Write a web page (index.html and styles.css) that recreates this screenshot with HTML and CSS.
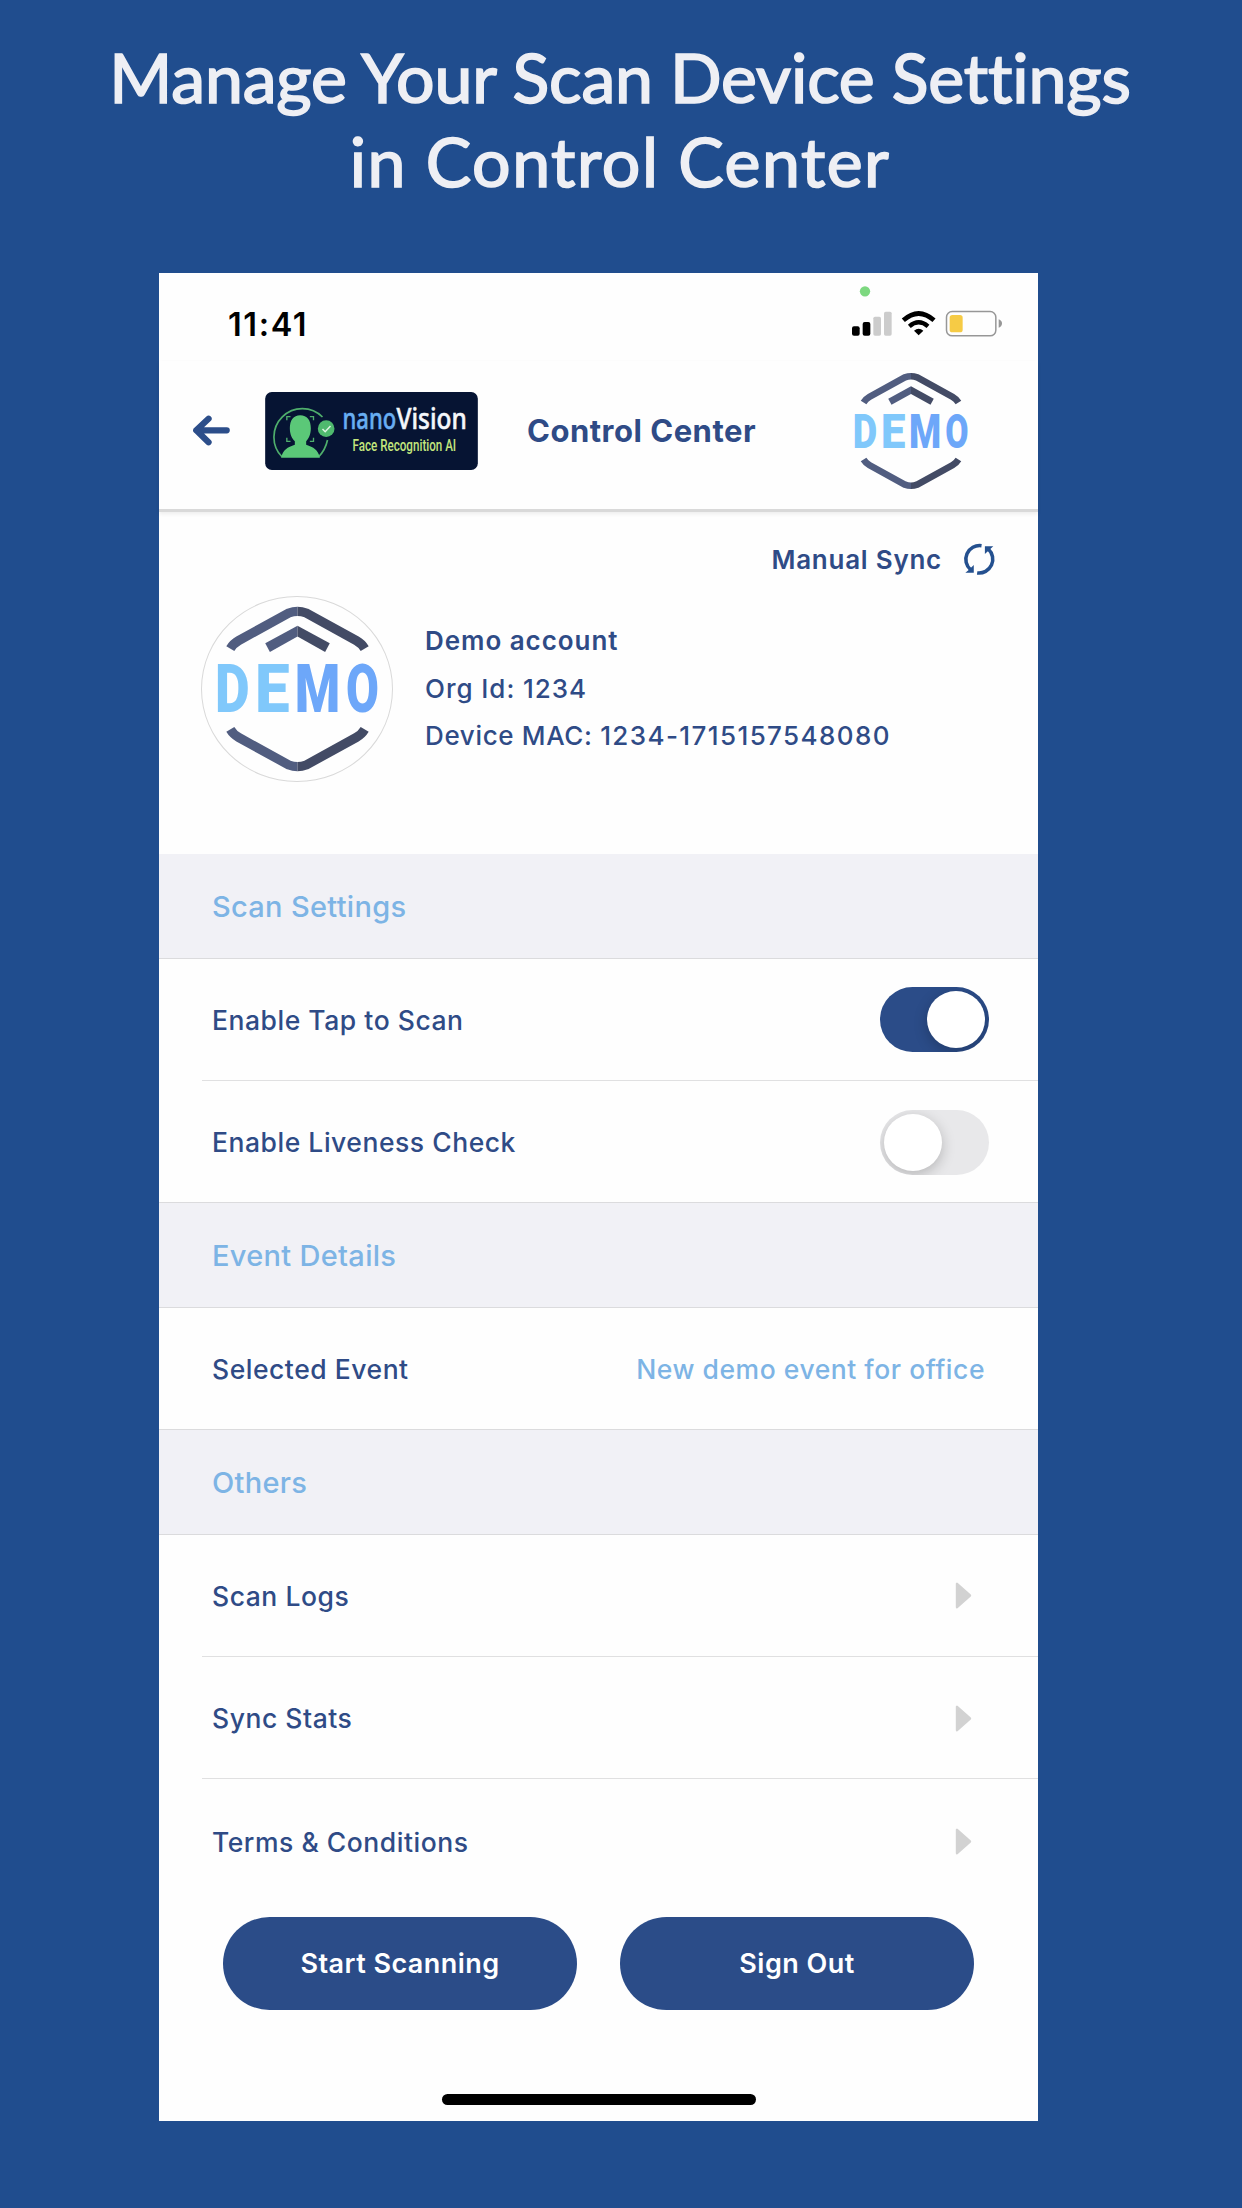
FILE: index.html
```html
<!DOCTYPE html>
<html lang="en">
<head>
<meta charset="utf-8">
<title>Control Center</title>
<link rel="stylesheet" href="styles.css">
</head>
<body>
<svg class="defs" width="0" height="0" aria-hidden="true">
  <symbol id="demo-logo" viewBox="100 280 502 511">
    <g fill="none" stroke="#515d80" stroke-width="28">
      <path d="M149 414Q158 399 174 390L325 307Q338 302 351 302"/>
      <path d="M149 657Q158 672 174 681L325 764Q338 769 351 769"/>
    </g>
    <g fill="none" stroke="#434b65" stroke-width="28">
      <path d="M553 414Q544 399 528 390L377 307Q364 302 351 302"/>
      <path d="M553 657Q544 672 528 681L377 764Q364 769 351 769"/>
    </g>
    <path d="M254 398L351 345V378L268 424Z" fill="#515d80"/>
    <path d="M448 398L351 345V378L434 424Z" fill="#434b65"/>
    <g class="demo-word">
      <text class="demo-light" x="103" y="606" textLength="104" lengthAdjust="spacingAndGlyphs">D</text>
      <text class="demo-light" x="223" y="606" textLength="104" lengthAdjust="spacingAndGlyphs">E</text>
      <text class="demo-deep" x="343" y="606" textLength="137" lengthAdjust="spacingAndGlyphs">M</text>
      <text class="demo-deep" x="497" y="606" textLength="99" lengthAdjust="spacingAndGlyphs">O</text>
    </g>
  </symbol>
  <symbol id="arrow" viewBox="0 0 17 27">
    <path d="M2 1.8v23.4L15 13.5z" fill="#d2d2d2" stroke="#d2d2d2" stroke-width="2.4" stroke-linejoin="round"/>
  </symbol>
</svg>

<h1 class="headline"><span class="headline-a">Manage Your Scan Device Settings</span><br><span class="headline-b">in Control Center</span></h1>

<main class="phone">
  <div class="status">
    <span class="clock">11:41</span>
    <svg class="status-icons" viewBox="756 79 450 153">
      <circle cx="795" cy="95" r="15.5" fill="#7dd880"/>
      <rect x="756" y="200" width="23" height="28" rx="6"/>
      <rect x="788" y="187" width="23" height="41" rx="6"/>
      <rect x="820" y="171" width="23" height="57" rx="5" fill="#ccc"/>
      <rect x="852" y="156" width="23" height="72" rx="5" fill="#ccc"/>
      <g fill="none" stroke="#000" stroke-width="14">
        <path d="M910 182Q956 141 1002 182"/>
        <path d="M928 200Q956 176 984 200" stroke-width="13"/>
      </g>
      <path d="M942 213Q956 201 970 213L956 227z"/>
      <rect x="1039.500" y="155.500" width="148" height="73" rx="17" fill="none" stroke="#979797" stroke-width="4.500"/>
      <rect x="1049" y="166" width="39" height="52" rx="8" fill="#f6cb45"/>
      <path d="M1196 179Q1206 183 1206 191.500T1196 204z" fill="#979797"/>
    </svg>
  </div>

  <header class="bar">
    <svg class="back" viewBox="129 464 112 93">
      <path d="M139 510H231M176 475L139 510L176 546" fill="none" stroke="#2c4e8a" stroke-width="19" stroke-linecap="round" stroke-linejoin="round"/>
    </svg>
    <svg class="badge" viewBox="345 393 638 234">
      <rect x="345" y="393" width="638" height="234" rx="20" fill="#061433"/>
      <g fill="none" stroke="#4fae6c" stroke-width="5">
        <path d="M396 588A83 83 0 1 1 517 468M532 537Q526 566 505 588"/>
        <path d="M410 478V467H421M479 467H490V478M410 530V541H421M479 541H490V530" stroke-width="4"/>
      </g>
      <path d="M450 463C471 463 482 478 482 502C482 520 475 534 468 541V551C490 558 504 566 509 590H393C398 566 412 558 434 551V541C426 534 419 520 419 502C419 478 430 463 450 463Z" fill="#5bc878"/>
      <circle cx="528" cy="503" r="25" fill="#4fb96e"/>
      <path d="M517 504L525 512L541 495" fill="none" stroke="#dff5e4" stroke-width="4.500"/>
      <text class="brand brand-nano" x="577" y="505" textLength="161" lengthAdjust="spacingAndGlyphs">nano</text>
      <text class="brand brand-vision" x="739" y="505" textLength="211" lengthAdjust="spacingAndGlyphs">Vision</text>
      <text class="tagline" x="607" y="571" textLength="311" lengthAdjust="spacingAndGlyphs">Face Recognition AI</text>
    </svg>
    <h2 class="bar-title">Control Center</h2>
    <svg class="bar-logo"><use href="#demo-logo"/></svg>
  </header>

  <section class="account">
    <div class="sync">
      <span class="sync-label">Manual Sync</span>
      <svg class="sync-icon" viewBox="1090 100 98 98">
        <g fill="none" stroke="#24508f" stroke-width="10.500">
          <path d="M1145 108A41 41 0 0 0 1113 180"/>
          <path d="M1132 189A41 41 0 0 0 1165 118"/>
        </g>
        <path d="M1122 165V188H1097L1107 180zM1155 133V110H1180L1171 118z" fill="#24508f"/>
      </svg>
    </div>
    <div class="profile">
      <div class="avatar"><svg class="avatar-logo"><use href="#demo-logo"/></svg></div>
      <div class="facts">
        <p class="fact fact-name">Demo account</p>
        <p class="fact">Org Id: 1234</p>
        <p class="fact fact-mac">Device MAC: <span class="digits">1234-1715157548080</span></p>
      </div>
    </div>
  </section>

  <h3 class="group">Scan Settings</h3>
  <div class="row"><span>Enable Tap to Scan</span><span class="switch switch-on"><i class="knob"></i></span></div>
  <div class="row row-split"><span>Enable Liveness Check</span><span class="switch"><i class="knob"></i></span></div>

  <h3 class="group group-next">Event Details</h3>
  <div class="row"><span>Selected Event</span><span class="value">New demo event for office</span></div>

  <h3 class="group group-next">Others</h3>
  <div class="row"><span>Scan Logs</span><svg class="arrow"><use href="#arrow"/></svg></div>
  <div class="row row-split"><span>Sync Stats</span><svg class="arrow"><use href="#arrow"/></svg></div>
  <div class="row row-split row-last"><span>Terms &amp; Conditions</span><svg class="arrow"><use href="#arrow"/></svg></div>

  <div class="actions">
    <button class="pill">Start Scanning</button>
    <button class="pill">Sign Out</button>
  </div>
  <div class="home"></div>
</main>
</body>
</html>
```
FILE: styles.css
```css
* { box-sizing: border-box; }

body {
  margin: 0;
  min-height: 2208px;
  background: #204d8e;
  font-family: Inter, "Liberation Sans", sans-serif;
  color: #2f4b86;
}

.defs { position: absolute; }

h1, h2, h3, p { margin: 0; }

.headline {
  height: 273px;
  padding: 35px 2px 0 0;
  font: 400 68px/84px Lato, "Open Sans", sans-serif;
  color: #eeeff4;
  text-align: center;
  -webkit-text-stroke: 1.7px #eeeff4;
  white-space: nowrap;
}
.headline-a { letter-spacing: -.17px; }
.headline-b { letter-spacing: 1.5px; }

.phone {
  display: flex;
  flex-direction: column;
  width: 879px;
  height: 1848px;
  margin-left: 159px;
  background: #fefefe;
}

.status {
  display: flex;
  justify-content: space-between;
  align-items: flex-start;
  height: 88px;
  padding: 13px 36px 0 69px;
}
.clock { margin-top: 20px; font-size: 32.500px; line-height: 38px; font-weight: 600; letter-spacing: 1.6px; color: #000; }
.status-icons { width: 150px; height: 51px; }

.bar {
  display: flex;
  align-items: center;
  height: 151px;
  padding: 0 68px 9px 34px;
  border-bottom: 3px solid #d9d9d9;
  box-shadow: 0 2px 4px rgba(0, 0, 0, .07);
}
.back { width: 37px; height: 31px; }
.badge { width: 213px; height: 78px; margin-left: 35px; }
.brand { font: 500 88px "Noto Sans", "Open Sans", sans-serif; stroke-width: 1.5px; }
.brand-nano { fill: #68aef2; stroke: #68aef2; }
.brand-vision { fill: #f4f7fb; stroke: #f4f7fb; }
.tagline { font: 500 51px Roboto, sans-serif; fill: #c3e67d; }
.bar-title { margin-left: 49px; font-size: 31px; line-height: 38px; font-weight: 700; letter-spacing: .5px; white-space: nowrap; }
.bar-logo { width: 118px; height: 120px; margin-left: auto; }

.demo-word { font: 900 202px Roboto, sans-serif; }
.demo-light { fill: #80c8fb; }
.demo-deep { fill: #6da7f9; }

.account { height: 342px; }
.sync {
  display: flex;
  align-items: center;
  justify-content: flex-end;
  height: 95px;
  padding-right: 42px;
}
.sync-label { font-size: 26px; font-weight: 600; letter-spacing: .75px; }
.sync-icon { width: 33px; height: 33px; margin-left: 21px; }

.profile { display: flex; padding-left: 42px; margin-top: -11px; }
.avatar {
  display: flex;
  align-items: center;
  justify-content: center;
  width: 192px;
  height: 186px;
  border: 1px solid #d9d9d9;
  border-radius: 50%;
}
.avatar-logo { width: 167px; height: 170px; }
.facts { margin-top: 21px; margin-left: 32px; }
.fact { font-size: 26px; line-height: 47.600px; font-weight: 500; letter-spacing: .95px; white-space: nowrap; }
.fact-name { font-weight: 600; }
.fact-mac { letter-spacing: .65px; }
.digits { letter-spacing: 1.4px; }

.group {
  display: flex;
  align-items: center;
  height: 105px;
  padding-left: 53px;
  border-bottom: 1px solid #dbdbdd;
  background: #f1f1f6;
  font-size: 29px;
  font-weight: 500;
  letter-spacing: .3px;
  color: #7db4e5;
}
.group-next { height: 106px; border-top: 1px solid #dbdbdd; }

.row {
  position: relative;
  display: flex;
  align-items: center;
  justify-content: space-between;
  height: 121px;
  padding: 0 49px 0 53px;
  font-size: 26.500px;
  font-weight: 500;
  letter-spacing: .53px;
}
.row-split { height: 122px; padding-top: 2px; }
.row-last { padding-top: 5px; }
.row-split::before {
  content: "";
  position: absolute;
  top: 0;
  left: 43px;
  right: 0;
  border-top: 1.500px solid #e0e0e1;
}
.value { margin-right: 4px; color: #7db4e5; }
.arrow { width: 17px; height: 27px; margin-right: 17px; }

.switch {
  width: 109px;
  height: 65px;
  padding: 4px;
  border-radius: 33px;
  background: #e8e8ea;
  overflow: hidden;
}
.knob {
  display: block;
  width: 58px;
  height: 57px;
  border-radius: 50%;
  background: #fff;
  box-shadow: 0 4px 14px rgba(0, 0, 0, .22);
}
.switch-on { background: #2b4c88; }
.switch-on .knob { margin-left: auto; }

.actions { display: flex; gap: 43px; padding: 17px 64px 0; }
.pill {
  width: 354px;
  height: 93px;
  padding: 0;
  border: 0;
  border-radius: 47px;
  background: #2b4c88;
  font: 600 27px/93px Inter, "Liberation Sans", sans-serif;
  letter-spacing: .45px;
  color: #fff;
}
.home {
  width: 314px;
  height: 11px;
  margin: auto auto 16px;
  border-radius: 6px;
  background: #000;
}
```
